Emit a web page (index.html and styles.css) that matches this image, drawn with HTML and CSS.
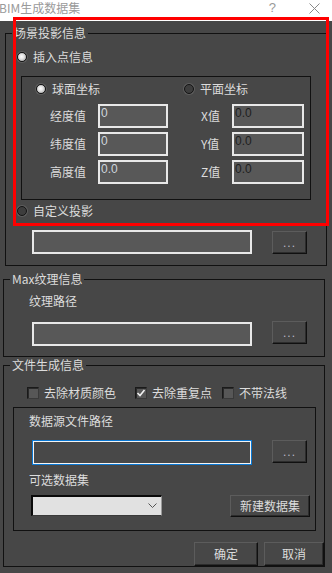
FILE: index.html
```html
<!DOCTYPE html>
<html lang="zh-CN">

<head>
    <meta charset="UTF-8">
    <meta name="viewport" content="width=device-width, initial-scale=1.0">
    <title>BIM生成数据集</title>
    <link rel="stylesheet" href="styles.css">
</head>

<body>
    <div class="titlebar">
        <span class="title">BIM生成数据集</span>
        <span class="help">?</span>
        <svg class="close" width="11" height="11" viewBox="0 0 11 11">
            <path d="M0.5 0.5L10.5 10.5M10.5 0.5L0.5 10.5" stroke="#8a8a8a" stroke-width="1" fill="none"/>
        </svg>
    </div>

    <div class="dialog">
        <!-- 场景投影 -->
        <fieldset class="group scene">
            <legend>场景投影信息</legend>
            <label class="radio-row first"><span class="radio on"></span>插入点信息</label>
            <div class="subbox coords">
                <div class="radio-pair">
                    <label class="radio-row sphere"><span class="radio on"></span>球面坐标</label>
                    <label class="radio-row"><span class="radio"></span>平面坐标</label>
                </div>
                <div class="coord-grid">
                    <span class="lbl">经度值</span>
                    <input type="text" class="field" value="0">
                    <span class="lbl lbl-x">X值</span>
                    <input type="text" class="field dark" value="0.0">

                    <span class="lbl">纬度值</span>
                    <input type="text" class="field" value="0">
                    <span class="lbl lbl-x">Y值</span>
                    <input type="text" class="field dark" value="0.0">

                    <span class="lbl">高度值</span>
                    <input type="text" class="field" value="0.0">
                    <span class="lbl lbl-x">Z值</span>
                    <input type="text" class="field dark" value="0.0">
                </div>
            </div>
            <label class="radio-row custom"><span class="radio"></span>自定义投影</label>
            <div class="path-row scene-path">
                <input type="text" class="field wide">
                <button class="btn dots">...</button>
            </div>
        </fieldset>

        <!-- Max纹理 -->
        <fieldset class="group texture">
            <legend>Max纹理信息</legend>
            <div class="caption">纹理路径</div>
            <div class="path-row texture-path">
                <input type="text" class="field wide">
                <button class="btn dots">...</button>
            </div>
        </fieldset>

        <!-- 文件生成 -->
        <fieldset class="group output">
            <legend>文件生成信息</legend>
            <div class="checks">
                <label class="check-item item1"><span class="check"></span>去除材质颜色</label>
                <label class="check-item item2"><span class="check on">
                    <svg width="10" height="10" viewBox="0 0 10 10"><path d="M1.5 5L4 7.5L8.5 2" stroke="#f2f2f2" stroke-width="1.6" fill="none"/></svg>
                </span>去除重复点</label>
                <label class="check-item"><span class="check"></span>不带法线</label>
            </div>
            <div class="subbox source">
                <div class="caption">数据源文件路径</div>
                <div class="path-row source-path">
                    <input type="text" class="field wide focused">
                    <button class="btn dots">...</button>
                </div>
                <div class="caption next">可选数据集</div>
                <div class="select-row">
                    <div class="select">
                        <svg width="9" height="6" viewBox="0 0 9 6"><path d="M0.5 0.5L4.5 4.5L8.5 0.5" stroke="#555" fill="none"/></svg>
                    </div>
                    <button class="btn new-set">新建数据集</button>
                </div>
            </div>
            <div class="actions">
                <button class="btn ok">确定</button>
                <button class="btn cancel">取消</button>
            </div>
        </fieldset>
    </div>

    <div class="annot"></div>
</body>

</html>
```

FILE: styles.css
```css
* {
    box-sizing: border-box;
}
body {
    margin: 0;
    width: 332px;
    height: 573px;
    overflow: hidden;
    position: relative;
    background: #474747;
    color: #dcdcdc;
    font: 12px/16px "Noto Sans CJK SC", sans-serif;
}
.titlebar {
    height: 21px;
    background: #fff;
    display: flex;
    align-items: flex-start;
}
.title {
    margin-left: -1px;
    color: #9a9a9a;
}
.help {
    margin-left: auto;
    margin-right: 33px;
    margin-top: 1px;
    color: #9a9a9a;
    font: 13px/14px "Liberation Sans", sans-serif;
}
.close {
    margin: 3px 12px 0 0;
}
.dialog {
    padding-top: 4px;
}

/* group boxes */
.group {
    margin: 0 0 0 3px;
    width: 322px;
    min-width: 0;
    padding: 0;
    border: 1px solid #111;
}
.group legend {
    margin-left: 6px;
    padding: 0 2px;
    line-height: 16px;
}
.scene {
    margin-left: 5px;
    padding-bottom: 11px;
}
.texture {
    margin-top: 5px;
    padding-bottom: 10px;
}
.output {
    padding-bottom: 0;
}
.subbox {
    border: 1px solid #111;
}

/* radios */
.radio-row {
    display: flex;
    align-items: center;
    height: 16px;
}
.radio {
    flex: none;
    width: 10px;
    height: 10px;
    margin-right: 6px;
    border-radius: 50%;
    border: 1px solid #141414;
    background: #3d3d3d;
    box-shadow: 0 0 0 1px #5e5e5e;
}
.radio.on {
    background: radial-gradient(circle at 45% 45%, #fcfcfc 0, #e6e6e6 35%, #a9a9a9 85%);
}
.first {
    margin: 8px 0 0 11px;
}
.custom {
    margin: 3px 0 0 11px;
}
.coords {
    margin: 11px 15px 0;
    padding: 4px 0 15px;
}
.radio-pair {
    display: flex;
    padding-left: 14px;
}
.sphere {
    width: 148px;
}
.coord-grid {
    display: grid;
    grid-template-columns: 48px 70px 64px 72px;
    row-gap: 4px;
    align-items: center;
    margin-top: 7px;
    padding-left: 28px;
}
.lbl-x {
    padding-left: 33px;
}

/* inputs */
.field {
    height: 24px;
    margin: 0;
    padding: 0 2px 6px 1px;
    border: 2px solid #e8e8e8;
    background: #585858;
    color: #cfd6dc;
    font: 12px/14px "Liberation Sans", sans-serif;
    outline: none;
}
.field.dark {
    color: #1e1e1e;
}
.field.wide {
    width: 220px;
}
.field.focused {
    height: 25px;
    border: 1px solid #0a78d4;
    box-shadow: inset 0 0 0 1px #f4f4f4;
    background: #484848;
}
.path-row {
    display: flex;
    align-items: flex-start;
}
.path-row .btn {
    margin-left: 20px;
}
.scene-path {
    margin: 11px 0 0 26px;
}
.scene-path .btn {
    margin-top: 1px;
}
.texture-path {
    margin: 12px 0 0 28px;
}
.texture-path .field {
    margin-top: 1px;
}
.source-path {
    margin: 11px 0 0 18px;
}
.caption {
    margin: 6px 0 0 25px;
}

/* buttons */
.btn {
    margin: 0;
    padding: 0;
    background: #474747;
    border: 1px solid;
    border-color: #5c5c5c #101010 #101010 #5c5c5c;
    box-shadow: inset -1px -1px 0 #2c2c2c;
    color: #dcdcdc;
    font: 12px/16px "Noto Sans CJK SC", sans-serif;
    cursor: pointer;
}
.dots {
    width: 35px;
    height: 23px;
    color: #b8b8c8;
    font-family: "Liberation Sans", sans-serif;
    letter-spacing: 1px;
}

/* checkboxes */
.checks {
    display: flex;
    align-items: center;
    height: 16px;
    margin: 12px 0 0 23px;
}
.check-item {
    display: flex;
    align-items: center;
}
.item1 {
    width: 108px;
}
.item2 {
    width: 87px;
}
.check {
    flex: none;
    display: flex;
    align-items: center;
    justify-content: center;
    width: 12px;
    height: 12px;
    margin-right: 5px;
    border: 1px solid #1a1a1a;
    border-right-color: #3a3a3a;
    border-bottom-color: #3a3a3a;
    background: #575757;
    box-shadow: inset 1px 1px 0 #2a2a2a;
}

/* data source */
.source {
    margin: 6px 8px 0 9px;
    padding: 5px 0 13px;
}
.source .caption {
    margin: 0 0 0 15px;
}
.source .caption.next {
    margin-top: 7px;
}
.select-row {
    display: flex;
    justify-content: space-between;
    align-items: flex-start;
    margin-top: 7px;
    padding: 0 5px 0 17px;
}
.select {
    width: 131px;
    height: 21px;
    display: flex;
    align-items: center;
    justify-content: flex-end;
    padding-right: 4px;
    background: #e1e1e1;
    border-style: solid;
    border-width: 2px 1px 1px 2px;
    border-color: #0a0a0a #9a9a9a #3a3a3a #0a0a0a;
}
.new-set {
    width: 80px;
    height: 22px;
}
.actions {
    display: flex;
    justify-content: flex-end;
    gap: 6px;
    margin-top: 11px;
}
.ok {
    width: 64px;
    height: 24px;
}
.cancel {
    width: 60px;
    height: 24px;
}

/* red annotation frame over the screenshot */
.annot {
    position: absolute;
    left: 13px;
    top: 17px;
    width: 316px;
    height: 209px;
    border: 3px solid #f00;
    pointer-events: none;
}
```
